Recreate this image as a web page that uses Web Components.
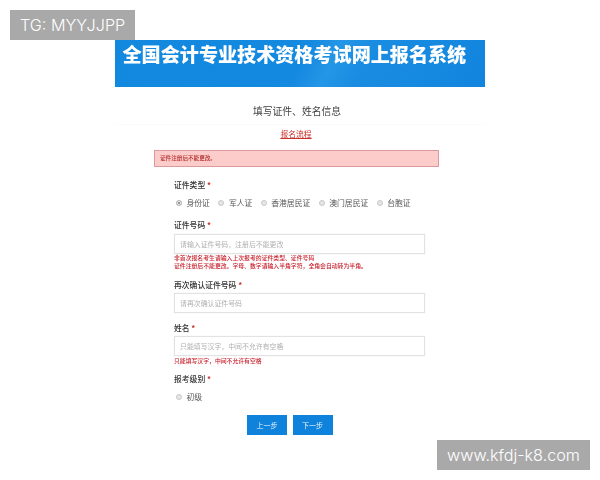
<!DOCTYPE html>
<html lang="zh"><head><meta charset="utf-8"><style>
html,body{margin:0;padding:0;background:#fff;height:480px;overflow:hidden}
body{font-family:"Liberation Sans","Noto Sans CJK SC",sans-serif;position:relative}
</style></head><body>
<exam-page>
  <form-field label="证件类型" style="--mt:12px">
    <div style="display:flex;gap:8.5px;margin:6px 0 0 2px">
      <radio-opt checked>身份证</radio-opt><radio-opt>军人证</radio-opt><radio-opt>香港居民证</radio-opt><radio-opt>澳门居民证</radio-opt><radio-opt>台胞证</radio-opt>
    </div>
  </form-field>
  <form-field label="证件号码" style="--mt:10px">
    <text-box style="--gap:3px" placeholder="请输入证件号码，注册后不能更改"></text-box>
    <field-note>非首次报名考生请输入上次报考的证件类型、证件号码<br>证件注册后不能更改。字母、数字请输入半角字符，全角会自动转为半角。</field-note>
  </form-field>
  <form-field label="再次确认证件号码" style="--mt:9px">
    <text-box style="--gap:1.5px" placeholder="请再次确认证件号码"></text-box>
  </form-field>
  <form-field label="姓名" style="--mt:9.5px">
    <text-box style="--gap:2px" placeholder="只能填写汉字，中间不允许有空格"></text-box>
    <field-note style="margin-top:.5px">只能填写汉字，中间不允许有空格</field-note>
  </form-field>
  <form-field label="报考级别" style="--mt:8.5px">
    <div style="display:flex;margin:6px 0 0 2px"><radio-opt>初级</radio-opt></div>
  </form-field>
  <div style="display:flex;gap:5.5px;margin:12px 0 0 73px">
    <step-btn>上一步</step-btn><step-btn>下一步</step-btn>
  </div>
</exam-page>
<water-mark style="left:10px;top:10px">TG: MYYJJPP</water-mark>
<water-mark style="left:437px;top:440px">www.kfdj-k8.com</water-mark>
<script>
function def(name,html){
  customElements.define(name,class extends HTMLElement{
    constructor(){super();this.attachShadow({mode:'open'}).innerHTML=html;}
    connectedCallback(){
      const r=this.shadowRoot;
      const l=r.querySelector('[data-label]'); if(l)l.firstChild.textContent=this.getAttribute('label')+' ';
      const p=r.querySelector('[data-ph]'); if(p)p.textContent=this.getAttribute('placeholder');
    }
  });
}
def('exam-page',`<style>
:host{display:block;width:370px;margin:40px 0 0 115px;color:#444;filter:blur(.45px)}
.banner{height:47px;box-sizing:border-box;padding:0 0 0 7.5px;background:linear-gradient(115deg,#1288df 0%,#1489e0 50%,#2496e6 58%,#1a8de2 66%,#1185de 100%);color:#fff;font:900 19.1px/28px "Noto Sans CJK SC",sans-serif;white-space:nowrap}
h1{margin:16px 0 0;padding-right:6px;text-align:center;font:400 9.8px/16px "Noto Sans CJK SC",sans-serif;color:#444}
.flow{margin-top:5px;padding:2px 8px 0 0;border-top:1px solid #fbfbfb;text-align:center;font:7.8px/13px "Noto Sans CJK SC",sans-serif}
.flow span{color:#c9302c;text-decoration:underline}
.alert{box-sizing:border-box;margin:10px 46px 0 39px;height:17px;background:#fccccb;border:1px solid #dc9a9a;padding-left:5px;color:#b02a2a;font:500 5.6px/15px "Noto Sans CJK SC",sans-serif}
.form{margin-left:59px;width:251px}
</style>
<div class="banner">全国会计专业技术资格考试网上报名系统</div>
<h1>填写证件、姓名信息</h1>
<div class="flow"><span>报名流程</span></div>
<div class="alert">证件注册后不能更改。</div>
<div class="form"><slot></slot></div>`);
def('form-field',`<style>
:host{display:block;margin-top:var(--mt,10px)}
.l{font:500 7.8px/12px "Noto Sans CJK SC",sans-serif;color:#333}
.l b{color:#c9302c;font-weight:700}
</style><div class="l" data-label> <b>*</b></div><slot></slot>`);
def('radio-opt',`<style>
:host{display:flex;align-items:center;gap:4.5px;font:7.8px/12px "Noto Sans CJK SC",sans-serif;color:#555;white-space:nowrap}
i{box-sizing:border-box;width:6px;height:6px;border-radius:50%;border:1px solid #c8c8c8;background:#e6e6e6;display:block}
:host([checked]) i{background:#777;box-shadow:inset 0 0 0 1px #fff;border-color:#bbb}
</style><i></i><slot></slot>`);
def('text-box',`<style>
:host{display:block;box-sizing:border-box;height:20px;margin-top:var(--gap,3px);border:1px solid #e2e2e2;box-shadow:0 0 1px #e8e8e8;background:#fff;padding-left:5px;font:6.9px/18px "Noto Sans CJK SC",sans-serif;color:#b0b0b0}
</style><span data-ph></span>`);
def('field-note',`<style>
:host{display:block;font:500 5.85px/8px "Noto Sans CJK SC",sans-serif;color:#c9202c;white-space:nowrap}
</style><slot></slot>`);
def('step-btn',`<style>
:host{display:block;width:40px;height:20px;background:#0f83dc;color:#e8f5ff;text-align:center;font:7px/20px "Noto Sans CJK SC",sans-serif}
</style><slot></slot>`);
def('water-mark',`<style>
:host{position:absolute;display:block;height:30px;padding:0 10px;background:#a9a9a9;color:#fff;font:300 16.2px/30px Inter,"Liberation Sans",sans-serif;white-space:nowrap}
</style><slot></slot>`);
</script>
</body></html>
